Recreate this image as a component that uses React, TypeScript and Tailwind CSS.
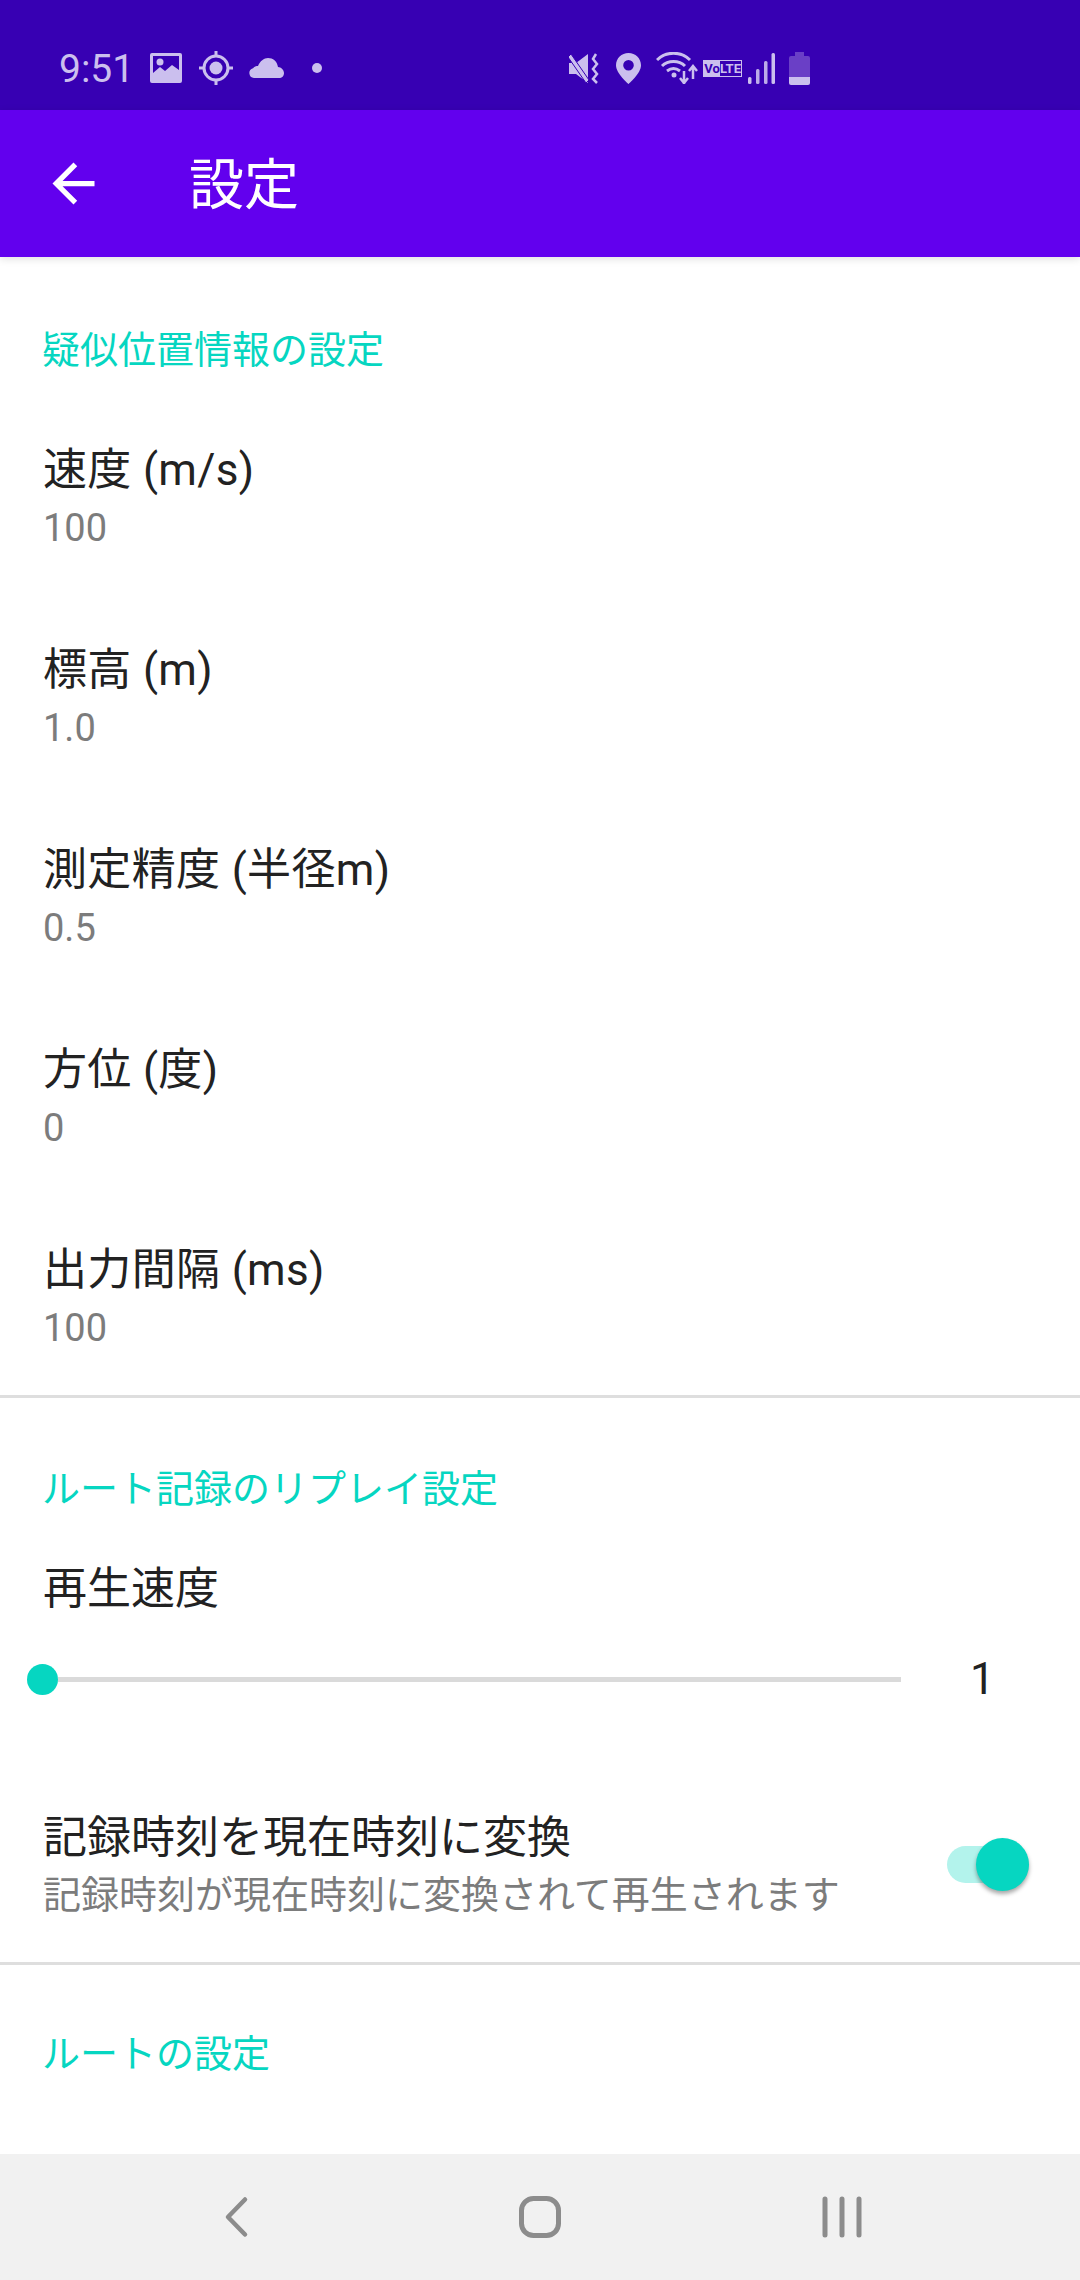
const pale = "#cbbfee";

function StatusBar() {
  return (
    <div className="flex h-[110px] items-center bg-[#3700B3] pl-[59px] pt-[26px] text-[#cbbfee]">
      <span className="w-[81px] pt-[3px] text-[39px] leading-none font-[Roboto,sans-serif]">9:51</span>
      {/* gallery */}
      <svg className="ml-[10px]" width="32" height="30" viewBox="0 0 32 30" fill={pale}>
        <path fillRule="evenodd" d="M2 0h28a2 2 0 0 1 2 2v26a2 2 0 0 1-2 2H2a2 2 0 0 1-2-2V2a2 2 0 0 1 2-2zm1 3v17l7-6 5 4 7-6 7 5V3H3z" />
        <circle cx="10" cy="9" r="3.5" />
      </svg>
      {/* gps */}
      <svg className="ml-[16px]" width="36" height="36" viewBox="0 0 36 36" fill="none" stroke={pale} strokeWidth="3">
        <circle cx="18" cy="18" r="12" />
        <circle cx="18" cy="18" r="6.5" fill={pale} stroke="none" />
        <path d="M18 1v5M18 30v5M1 18h5M30 18h5" />
      </svg>
      {/* cloud */}
      <svg className="ml-[15px]" width="35" height="20" viewBox="0 0 35 20" fill={pale}>
        <path d="M5 20a5 5 0 0 1-1-9.8C5 9 7 8 9 8c2-5 6-8 10-8 5 0 9 3 10 9 3 0 6 3 6 6 0 3-2 5-5 5H5z" />
      </svg>
      <span className="ml-[28px] h-[10px] w-[10px] rounded-full bg-[#cbbfee]" />

      {/* vibrate / mute */}
      <svg className="ml-[247px]" width="31" height="31" viewBox="0 0 31 31" fill={pale}>
        <path d="M0 10h7L19 1v29L7 21H0z" />
        <path d="M2 1l18 26-3 3L-1 4z" stroke="#3700B3" strokeWidth="1" />
        <path d="M27 1l-3 5 4 5-4 5 4 5-4 5 4 4" fill="none" stroke={pale} strokeWidth="2.5" />
      </svg>
      {/* pin */}
      <svg className="ml-[16px]" width="25" height="31" viewBox="0 0 25 31" fill={pale}>
        <path fillRule="evenodd" d="M12.5 0C5.6 0 0 5.4 0 12.2 0 20.5 12.5 31 12.5 31S25 20.5 25 12.2C25 5.4 19.4 0 12.5 0zm0 7a5.3 5.3 0 1 1 0 10.6 5.3 5.3 0 0 1 0-10.6z" />
      </svg>
      {/* wifi with arrows */}
      <svg className="ml-[15px]" width="42" height="32" viewBox="0 0 42 32" fill="none" stroke={pale} strokeWidth="3">
        <path d="M1 8C10-1 25-1 34 8M6 14c6-6 17-6 23 0M11 19c4-3 9-3 13 0" />
        <circle cx="18" cy="23" r="2.5" fill={pale} stroke="none" />
        <path d="M28 32V19M24 26l4 5 4-5M37 27V14M33 19l4-5 4 5" strokeWidth="2.5" />
      </svg>
      {/* VoLTE */}
      <div className="ml-[5px] flex h-[17px] w-[39px] items-center border border-[#cbbfee] text-[13px] leading-none font-bold font-[Roboto,sans-serif]">
        <span className="flex h-full w-[17px] items-center justify-center bg-[#cbbfee] text-[#3700B3]">Vo</span>
        <span className="flex-1 text-center text-[#cbbfee]">LTE</span>
      </div>
      {/* signal */}
      <svg className="ml-[6px]" width="27" height="31" viewBox="0 0 27 31" fill={pale}>
        <rect x="0" y="24" width="3.5" height="7" rx="1.5" />
        <rect x="8" y="16" width="3.5" height="15" rx="1.5" opacity="0.9" />
        <rect x="16" y="8" width="3.5" height="23" rx="1.5" opacity="0.9" />
        <rect x="23.5" y="0" width="3.5" height="31" rx="1.5" />
      </svg>
      {/* battery */}
      <svg className="ml-[14px]" width="21" height="33" viewBox="0 0 21 33">
        <path d="M6 0h9v4h4a2 2 0 0 1 2 2v19H0V6a2 2 0 0 1 2-2h4z" fill="#6a3fc6" />
        <path d="M0 25h21v6a2 2 0 0 1-2 2H2a2 2 0 0 1-2-2z" fill={pale} />
      </svg>
    </div>
  );
}

function AppBar() {
  return (
    <div className="relative z-10 flex h-[147px] items-center bg-[#6200EE] pl-[42px] shadow-[0_2px_8px_rgba(0,0,0,0.12)]">
      <svg width="63" height="63" viewBox="0 0 24 24" fill="white">
        <path d="M20 11H7.83l5.59-5.59L12 4l-8 8 8 8 1.41-1.41L7.83 13H20v-2z" />
      </svg>
      <h1 className="ml-[84px] pt-[4px] text-[55px] leading-none text-white">設定</h1>
    </div>
  );
}

function Category({ label, className }: { label: string; className: string }) {
  return (
    <div className={`flex items-end pl-[42px] pr-[43px] text-[38px] leading-[50px] text-[#06d6c1] ${className}`}>
      {label}
    </div>
  );
}

function ValueRow({ title, value }: { title: string; value: string }) {
  return (
    <div className="flex h-[200px] flex-col justify-center px-[43px] pt-[8px]">
      <div className="text-[44px] leading-[58px] tracking-[0.35px] text-[#222222]">{title}</div>
      <div className="text-[38px] leading-[58px] text-[#7c7c7c]">{value}</div>
    </div>
  );
}

const Divider = () => <div className="h-[3px] bg-[#dedede]" />;

const rows = [
  { title: "速度 (m/s)", value: "100" },
  { title: "標高 (m)", value: "1.0" },
  { title: "測定精度 (半径m)", value: "0.5" },
  { title: "方位 (度)", value: "0" },
  { title: "出力間隔 (ms)", value: "100" },
];

export default function App() {
  return (
    <div className="flex h-[2280px] w-[1080px] flex-col overflow-hidden bg-white font-[Roboto,'Noto_Sans_CJK_JP',sans-serif]">
      <StatusBar />
      <AppBar />

      <main className="flex-1">
        <Category label="疑似位置情報の設定" className="h-[118px]" />
        <div className="h-[20px]" />
        {rows.map((r) => (
          <ValueRow key={r.title} title={r.title} value={r.value} />
        ))}
        <Divider />

        <Category label="ルート記録のリプレイ設定" className="h-[116px]" />
        <div className="flex h-[109px] items-end px-[43px] pb-[5px] text-[44px] leading-[58px] text-[#222222]">再生速度</div>

        {/* speed slider */}
        <div className="flex h-[112px] items-center pl-[27px]">
          <div className="flex w-[874px] items-center">
            <span className="h-[31px] w-[31px] shrink-0 rounded-full bg-[#06d6c1]" />
            <span className="h-[5px] flex-1 bg-[#dadada]" />
          </div>
          <span className="ml-[69px] text-[44px] leading-none text-[#222222]">1</span>
        </div>

        <div className="flex h-[227px] items-center justify-between pt-[36px] pl-[43px] pr-[51px]">
          <div>
            <div className="text-[44px] leading-[57px] text-[#222222]">記録時刻を現在時刻に変換</div>
            <div className="text-[38px] leading-[57px] text-[#7c7c7c]">記録時刻が現在時刻に変換されて再生されます</div>
          </div>
          <div className="relative mb-[4px] h-[37px] w-[82px] rounded-full bg-[#b3f3ec]">
            <span className="absolute -top-[8px] right-0 h-[53px] w-[53px] rounded-full bg-[#06d6c1] shadow-[0_3px_4px_rgba(0,0,0,0.35)]" />
          </div>
        </div>
        <Divider />

        <Category label="ルートの設定" className="h-[114px]" />
      </main>

      <nav className="flex h-[126px] shrink-0 items-center justify-center gap-[242px] bg-[#f1f1f1]">
        <svg width="60" height="60" viewBox="0 0 60 60" fill="none" stroke="#8c8c8c" strokeWidth="4.5" strokeLinecap="round" strokeLinejoin="round">
          <path d="M37 12.5L20 30l17 17.5" />
        </svg>
        <svg width="60" height="60" viewBox="0 0 60 60" fill="none" stroke="#8c8c8c" strokeWidth="5">
          <rect x="11.5" y="11.5" width="37" height="37" rx="12" />
        </svg>
        <svg width="60" height="60" viewBox="0 0 60 60" fill="none" stroke="#8c8c8c" strokeWidth="5" strokeLinecap="round">
          <path d="M13 12v36M30 12v36M47 12v36" />
        </svg>
      </nav>
    </div>
  );
}
